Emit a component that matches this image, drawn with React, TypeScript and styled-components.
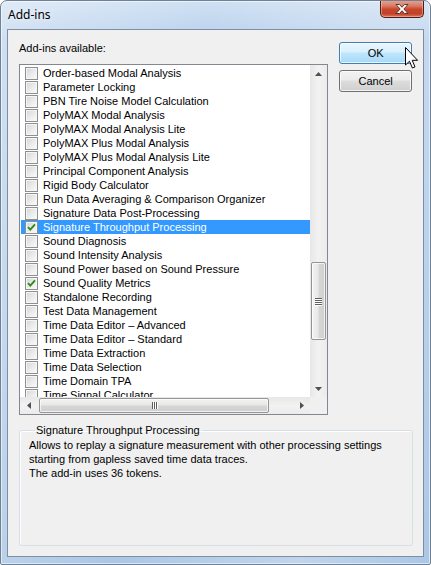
import styled, { createGlobalStyle } from "styled-components";

const GlobalStyle = createGlobalStyle`
  html, body {
    margin: 0;
    padding: 0;
    background: #ffffff;
  }
`;

const items = [
  { label: "Order-based Modal Analysis" },
  { label: "Parameter Locking" },
  { label: "PBN Tire Noise Model Calculation" },
  { label: "PolyMAX Modal Analysis" },
  { label: "PolyMAX Modal Analysis Lite" },
  { label: "PolyMAX Plus Modal Analysis" },
  { label: "PolyMAX Plus Modal Analysis Lite" },
  { label: "Principal Component Analysis" },
  { label: "Rigid Body Calculator" },
  { label: "Run Data Averaging & Comparison Organizer" },
  { label: "Signature Data Post-Processing" },
  { label: "Signature Throughput Processing", checked: true, selected: true },
  { label: "Sound Diagnosis" },
  { label: "Sound Intensity Analysis" },
  { label: "Sound Power based on Sound Pressure" },
  { label: "Sound Quality Metrics", checked: true },
  { label: "Standalone Recording" },
  { label: "Test Data Management" },
  { label: "Time Data Editor \u2013 Advanced" },
  { label: "Time Data Editor \u2013 Standard" },
  { label: "Time Data Extraction" },
  { label: "Time Data Selection" },
  { label: "Time Domain TPA" },
  { label: "Time Signal Calculator" },
];

export default function App() {
  return (
    <>
      <GlobalStyle />
      <Window>
        <TitleBar>
          <Title>Add-ins</Title>
          <CloseButton>
            <svg width="16" height="12" viewBox="0 0 16 12">
              <path
                d="M2 1.5 L5.5 1.5 L8 4.3 L10.5 1.5 L14 1.5 L9.8 6 L14 10.5 L10.5 10.5 L8 7.7 L5.5 10.5 L2 10.5 L6.2 6 Z"
                fill="#ffffff"
                stroke="#4a2a25"
                strokeWidth="0.9"
                strokeLinejoin="round"
              />
            </svg>
          </CloseButton>
        </TitleBar>

        <Client>
          <TopRow>
            <LeftColumn>
              <FieldLabel>Add-ins available:</FieldLabel>
              <ListBox>
                <Items>
                  {items.map((it) => (
                    <ItemRow key={it.label} $selected={!!it.selected}>
                      <CheckBox>
                        {it.checked && (
                          <svg width="11" height="11" viewBox="0 0 11 11">
                            <path
                              d="M2 5.2 L4.3 7.6 L9 2.4"
                              fill="none"
                              stroke="#2e8c16"
                              strokeWidth="1.9"
                            />
                          </svg>
                        )}
                      </CheckBox>
                      <ItemText>{it.label}</ItemText>
                    </ItemRow>
                  ))}
                </Items>

                <VScroll>
                  <ArrowButton>
                    <svg width="7" height="4" viewBox="0 0 7 4">
                      <path d="M0 4 L3.5 0 L7 4 Z" fill="#505050" />
                    </svg>
                  </ArrowButton>
                  <VTrack>
                    <VThumb $offset={197} $size={78}>
                      <Grip $vertical>
                        <span />
                        <span />
                        <span />
                        <span />
                      </Grip>
                    </VThumb>
                  </VTrack>
                  <ArrowButton>
                    <svg width="7" height="4" viewBox="0 0 7 4">
                      <path d="M0 0 L7 0 L3.5 4 Z" fill="#505050" />
                    </svg>
                  </ArrowButton>
                </VScroll>

                <HScroll>
                  <ArrowButton>
                    <svg width="4" height="7" viewBox="0 0 4 7">
                      <path d="M4 0 L4 7 L0 3.5 Z" fill="#505050" />
                    </svg>
                  </ArrowButton>
                  <HTrack>
                    <HThumb $size={230}>
                      <Grip>
                        <span />
                        <span />
                        <span />
                      </Grip>
                    </HThumb>
                  </HTrack>
                  <ArrowButton>
                    <svg width="4" height="7" viewBox="0 0 4 7">
                      <path d="M0 0 L4 3.5 L0 7 Z" fill="#505050" />
                    </svg>
                  </ArrowButton>
                </HScroll>
                <Corner />
              </ListBox>
            </LeftColumn>

            <ButtonColumn>
              <DialogButton $default>OK</DialogButton>
              <DialogButton>Cancel</DialogButton>
            </ButtonColumn>
          </TopRow>

          <GroupBox>
            <legend>Signature Throughput Processing</legend>
            <Description>
              Allows to replay a signature measurement with other processing settings
              <br />
              starting from gapless saved time data traces.
              <br />
              The add-in uses 36 tokens.
            </Description>
          </GroupBox>
        </Client>

        <Pointer width="14" height="24" viewBox="0 0 14 24">
          <path
            d="M0.5 0.5 L0.5 18 L4.5 14.2 L7.4 21 L10 19.9 L7.2 13.3 L12.6 13.3 Z"
            fill="#ffffff"
            stroke="#000000"
            strokeWidth="1"
            strokeLinejoin="round"
          />
        </Pointer>
      </Window>
    </>
  );
}

const Window = styled.div`
  position: relative;
  width: 431px;
  height: 565px;
  box-sizing: border-box;
  border: 1px solid #6f8194;
  border-radius: 7px 7px 2px 2px;
  background:
    linear-gradient(100deg, rgba(255, 255, 255, 0.35) 0%, rgba(255, 255, 255, 0) 40%, rgba(255, 255, 255, 0.25) 75%, rgba(255, 255, 255, 0) 100%),
    linear-gradient(180deg, #cfe0f3 0%, #b7d0ec 40px, #abc7e6 100%);
  box-shadow: inset 0 0 0 1px rgba(255, 255, 255, 0.55);
  display: flex;
  flex-direction: column;
  overflow: hidden;
`;

const TitleBar = styled.div`
  height: 28px;
  display: flex;
  align-items: flex-start;
  justify-content: space-between;
  padding-left: 7px;
`;

const Title = styled.div`
  font-family: "Noto Sans", "Open Sans", sans-serif;
  font-size: 12px;
  color: #000000;
  line-height: 14px;
  margin-top: 7px;
  text-shadow: 0 0 6px rgba(255, 255, 255, 0.9);
`;

const CloseButton = styled.div`
  width: 44px;
  height: 18px;
  margin-right: 6px;
  margin-top: -1px;
  box-sizing: border-box;
  border: 1px solid #4d1d14;
  border-top: none;
  border-radius: 0 0 5px 5px;
  background: linear-gradient(180deg, #e7a797 0%, #d97a63 35%, #c7452d 55%, #c24128 80%, #d9755a 100%);
  box-shadow: inset 0 0 0 1px rgba(255, 210, 200, 0.45);
  display: flex;
  align-items: center;
  justify-content: center;
`;

const Client = styled.div`
  margin: 0 6px 0 6px;
  height: 528px;
  box-sizing: border-box;
  border: 1px solid #7e8fa2;
  background: #f0f0f0;
  padding: 0 11px 0 11px;
  display: flex;
  flex-direction: column;
  font-family: "Liberation Sans", Arial, sans-serif;
  font-size: 11px;
  color: #000000;
`;

const TopRow = styled.div`
  display: flex;
  gap: 11px;
`;

const LeftColumn = styled.div`
  width: 310px;
  display: flex;
  flex-direction: column;
  padding-top: 11px;
`;

const FieldLabel = styled.div`
  line-height: 14px;
  margin-bottom: 9px;
`;

const ListBox = styled.div`
  height: 351px;
  box-sizing: border-box;
  border: 1px solid #828790;
  background: #ffffff;
  display: grid;
  grid-template-columns: 1fr 17px;
  grid-template-rows: 1fr 17px;
  overflow: hidden;
`;

const Items = styled.div`
  overflow: hidden;
  padding: 1px 0 0 1px;
`;

const ItemRow = styled.div<{ $selected: boolean }>`
  height: 14px;
  display: flex;
  align-items: center;
  gap: 5px;
  padding-left: 4px;
  background: ${(p) => (p.$selected ? "#3399ff" : "transparent")};
  color: ${(p) => (p.$selected ? "#ffffff" : "#000000")};
  white-space: nowrap;
`;

const CheckBox = styled.div`
  width: 13px;
  height: 13px;
  flex: none;
  box-sizing: border-box;
  border: 1px solid #8e8f8f;
  background: linear-gradient(135deg, #d3d4d6 0%, #eeeeee 60%, #fbfbfb 100%);
  box-shadow: inset 0 0 0 1px #f5f5f5;
  display: flex;
  align-items: center;
  justify-content: center;
`;

const ItemText = styled.span`
  line-height: 14px;
`;

const VScroll = styled.div`
  background: linear-gradient(90deg, #e7e7e7 0%, #f2f2f2 50%, #ebebeb 100%);
  display: flex;
  flex-direction: column;
`;

const HScroll = styled.div`
  background: linear-gradient(180deg, #e7e7e7 0%, #f2f2f2 50%, #ebebeb 100%);
  display: flex;
`;

const Corner = styled.div`
  background: #f0f0f0;
`;

const ArrowButton = styled.div`
  width: 17px;
  height: 17px;
  flex: none;
  display: flex;
  align-items: center;
  justify-content: center;
`;

const VTrack = styled.div`
  flex: 1;
  display: flex;
  flex-direction: column;
  align-items: center;
`;

const HTrack = styled.div`
  flex: 1;
  display: flex;
  align-items: center;
`;

const VThumb = styled.div<{ $offset: number; $size: number }>`
  margin-top: ${(p) => p.$offset - 17}px;
  width: 15px;
  height: ${(p) => p.$size}px;
  box-sizing: border-box;
  border: 1px solid #959595;
  border-radius: 2px;
  background: linear-gradient(90deg, #f3f3f3 0%, #e8e8e8 45%, #d6d6d6 55%, #cfcfcf 100%);
  box-shadow: inset 0 0 0 1px rgba(255, 255, 255, 0.7);
  display: flex;
  align-items: center;
  justify-content: center;
`;

const HThumb = styled.div<{ $size: number }>`
  margin-left: 2px;
  width: ${(p) => p.$size}px;
  height: 15px;
  box-sizing: border-box;
  border: 1px solid #959595;
  border-radius: 2px;
  background: linear-gradient(180deg, #f3f3f3 0%, #e8e8e8 45%, #d6d6d6 55%, #cfcfcf 100%);
  box-shadow: inset 0 0 0 1px rgba(255, 255, 255, 0.7);
  display: flex;
  align-items: center;
  justify-content: center;
`;

const Grip = styled.div<{ $vertical?: boolean }>`
  display: flex;
  flex-direction: ${(p) => (p.$vertical ? "column" : "row")};
  gap: 1px;

  & span {
    display: block;
    width: ${(p) => (p.$vertical ? "7px" : "1px")};
    height: ${(p) => (p.$vertical ? "1px" : "7px")};
    background: #5f5f5f;
    box-shadow: ${(p) => (p.$vertical ? "0 1px 0 #ffffff" : "1px 0 0 #ffffff")};
  }
`;

const ButtonColumn = styled.div`
  width: 73px;
  padding-top: 12px;
  display: flex;
  flex-direction: column;
  gap: 6px;
`;

const DialogButton = styled.div<{ $default?: boolean }>`
  height: 22px;
  box-sizing: border-box;
  border: 1px solid ${(p) => (p.$default ? "#3c7fb1" : "#707070")};
  border-radius: 3px;
  background: ${(p) =>
    p.$default
      ? "linear-gradient(180deg, #eaf6fd 0%, #d9f0fc 45%, #bee6fd 50%, #a7d9f5 100%)"
      : "linear-gradient(180deg, #f2f2f2 0%, #ebebeb 45%, #dddddd 50%, #cfcfcf 100%)"};
  box-shadow: inset 0 0 0 1px rgba(255, 255, 255, 0.75);
  display: flex;
  align-items: center;
  justify-content: center;
  line-height: 14px;
`;

const GroupBox = styled.fieldset`
  margin: 8px 0 0 0;
  width: 394px;
  height: 123px;
  box-sizing: border-box;
  border: 1px solid #d5dfe5;
  border-radius: 3px;
  box-shadow: inset 1px 1px 0 #ffffff;
  padding: 0 0 0 9px;

  & legend {
    margin-left: 6px;
    padding: 0 2px 0 1px;
    line-height: 14px;
  }
`;

const Description = styled.div`
  line-height: 14px;
  margin-top: 1px;
`;

const Pointer = styled.svg`
  position: absolute;
  left: 404px;
  top: 46px;
`;
